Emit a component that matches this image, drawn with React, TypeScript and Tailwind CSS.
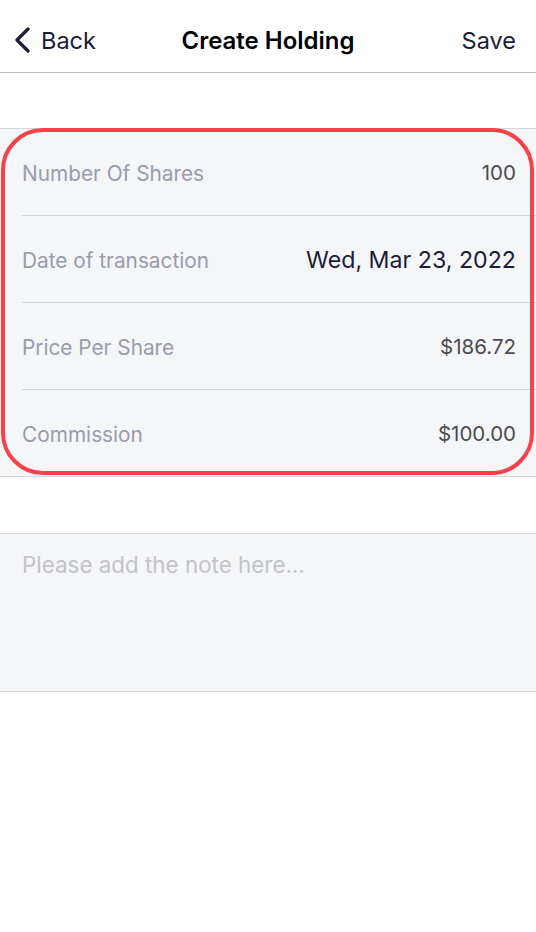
import React from "react";

const rows = [
  { label: "Number Of Shares", value: "100", big: false },
  { label: "Date of transaction", value: "Wed, Mar 23, 2022", big: true },
  { label: "Price Per Share", value: "$186.72", big: false },
  { label: "Commission", value: "$100.00", big: false },
];

export default function App() {
  return (
    <div
      className="w-[536px] h-[932px] bg-white flex flex-col"
      style={{ fontFamily: "Inter, 'Noto Sans', sans-serif" }}
    >
      <header className="h-[73px] shrink-0 border-b border-[#bdbdc1] flex items-center justify-between px-3 relative">
        <div className="flex items-center gap-[10px] pt-[9px]">
          <svg width="18" height="26" viewBox="0 0 18 26" className="ml-[1px] -mt-[2px]">
            <path d="M15 2 L4 13 L15 24" fill="none" stroke="#1d1c3a" strokeWidth="3.2" strokeLinecap="round" strokeLinejoin="round" />
          </svg>
          <span className="text-[23.5px] text-[#1d1c3a] leading-none">Back</span>
        </div>
        <span className="absolute left-1/2 -translate-x-1/2 text-[24px] font-semibold text-black leading-none pt-[9px] whitespace-nowrap">
          Create Holding
        </span>
        <span className="text-[23.5px] text-[#1d1c3a] leading-none pr-[8px] pt-[9px]">Save</span>
      </header>

      <div className="h-[55px] shrink-0" />

      <section className="relative border-t border-b border-[#d5d6da] bg-[#f5f6f8]">
        {rows.map((r, i) => (
          <div key={r.label} className="pl-[22px]">
            <div className={i > 0 ? "border-t border-[#d3d4d8]" : ""}>
              <div className="h-[86px] flex items-center justify-between pr-[20px] pt-[3px]">
                <span className="text-[20.8px] text-[#989cab]">{r.label}</span>
                <span className={r.big ? "text-[23.2px] text-[#1d1c3a]" : "text-[20.5px] text-[#4b4b4f]"}>
                  {r.value}
                </span>
              </div>
            </div>
          </div>
        ))}
        <div className="absolute left-[1px] right-[2px] top-[-1px] bottom-[1px] rounded-[42px] border-[4px] border-[#f9414a] pointer-events-none" />
      </section>

      <div className="h-[56px] shrink-0" />

      <section className="h-[159px] border-t border-b border-[#d8d9dc] bg-[#f5f6f8] pl-[22px] pt-[14px]">
        <span className="text-[22.4px] text-[#c3c4c9]">Please add the note here...</span>
      </section>
    </div>
  );
}
